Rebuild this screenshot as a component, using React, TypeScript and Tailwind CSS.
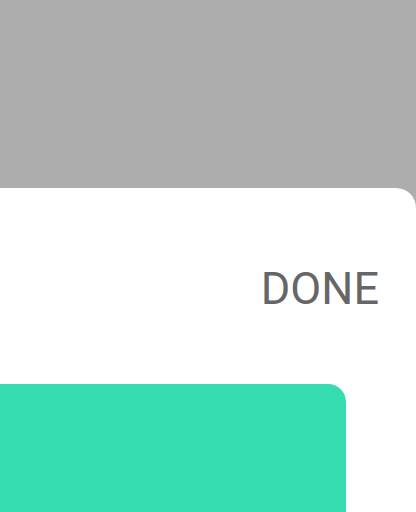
export default function App() {
    return (
        <div
            className="flex h-[512px] w-[416px] flex-col overflow-hidden bg-[#adadad]"
            style={{ fontFamily: "Roboto, 'Liberation Sans', sans-serif" }}
        >
            <div className="h-[188px] shrink-0" />
            <div className="flex flex-1 flex-col rounded-tr-[20px] bg-white">
                <div className="flex justify-end pr-[37px] pt-[78px]">
                    <button type="button" className="text-[45px] leading-none tracking-normal text-[#666666]">
                        DONE
                    </button>
                </div>
                <div className="mt-[73px] flex-1 w-[346px] rounded-tr-[18px] bg-[#35dcb0]" />
            </div>
        </div>
    );
}
